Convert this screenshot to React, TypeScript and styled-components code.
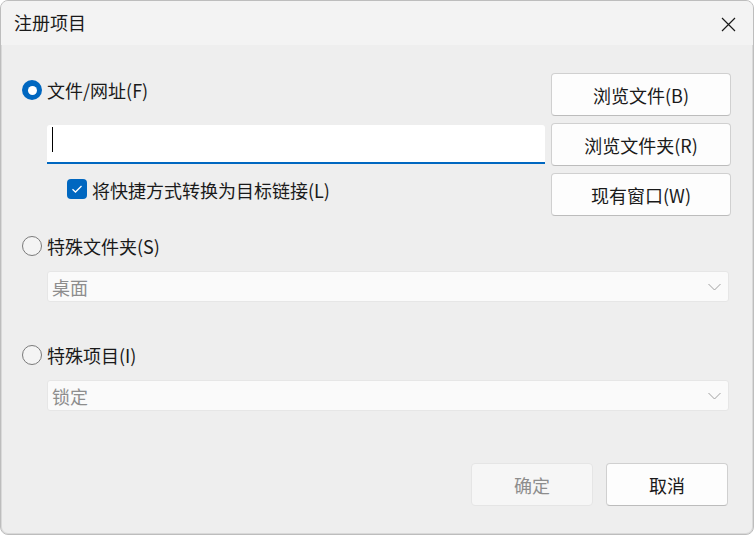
import React from "react";
import styled, { createGlobalStyle } from "styled-components";

const GlobalStyle = createGlobalStyle`
  html, body {
    margin: 0;
    padding: 0;
    background: #ffffff;
  }
  * { box-sizing: border-box; }
  body {
    font-family: "Noto Sans CJK SC", "Noto Sans", sans-serif;
    color: #1a1a1a;
  }
`;

const Window = styled.div`
  width: 754px;
  height: 535px;
  display: flex;
  flex-direction: column;
  background: #eeeeee;
  border: 1px solid #bdbdbd;
  border-radius: 8px;
  box-shadow: inset 0 0 0 1px #d9d9d9;
  overflow: hidden;
`;

const TitleBar = styled.div`
  height: 44px;
  flex: none;
  display: flex;
  align-items: center;
  justify-content: space-between;
  padding: 0 17px 0 13px;
  background: #f3f3f3;
`;

const Title = styled.span`
  font-size: 18px;
  line-height: 1;
  color: #1a1a1a;
  margin-top: -2px;
`;

const CloseButton = styled.button`
  width: 16px;
  height: 16px;
  padding: 0;
  border: none;
  background: transparent;
  display: flex;
  align-items: center;
  justify-content: center;
  margin-top: 2px;
`;

const Body = styled.div`
  flex: 1;
  display: flex;
  flex-direction: column;
  padding: 28px 22px 0 21px;
`;

const TopSection = styled.div`
  display: flex;
  gap: 6px;
`;

const LeftColumn = styled.div`
  flex: 1;
  display: flex;
  flex-direction: column;
`;

const ButtonColumn = styled.div`
  width: 180px;
  display: flex;
  flex-direction: column;
  gap: 7px;
`;

const RadioRow = styled.label<{ $top: number }>`
  display: flex;
  align-items: center;
  gap: 5px;
  height: 22px;
  margin-top: ${(p) => p.$top}px;
  font-size: 18px;
  color: #1a1a1a;
`;

const RadioDot = styled.span<{ $checked?: boolean }>`
  width: 20px;
  height: 20px;
  border-radius: 50%;
  flex: none;
  display: flex;
  align-items: center;
  justify-content: center;
  background: ${(p) => (p.$checked ? "#0067c0" : "#f4f4f4")};
  border: ${(p) => (p.$checked ? "none" : "1px solid #7a7a7a")};
  &::after {
    content: "";
    display: ${(p) => (p.$checked ? "block" : "none")};
    width: 9px;
    height: 9px;
    border-radius: 50%;
    background: #ffffff;
  }
`;

const TextField = styled.div`
  margin: 24px 0 0 25px;
  height: 39px;
  background: #ffffff;
  border-bottom: 2px solid #0067c0;
  border-radius: 3px 3px 0 0;
  display: flex;
  align-items: flex-start;
  padding: 2px 0 0 5px;
`;

const Caret = styled.span`
  width: 1px;
  height: 25px;
  background: #000000;
`;

const CheckRow = styled.label`
  display: flex;
  align-items: center;
  gap: 5px;
  height: 20px;
  margin: 15px 0 0 45px;
  font-size: 18px;
  color: #1a1a1a;
  & > span:last-child {
    margin-top: 2px;
  }
`;

const CheckBox = styled.span`
  width: 20px;
  height: 20px;
  flex: none;
  border-radius: 4px;
  background: #0067c0;
  display: flex;
  align-items: center;
  justify-content: center;
`;

const Button = styled.button<{ $disabled?: boolean; $width?: number }>`
  height: 43px;
  width: ${(p) => (p.$width ? `${p.$width}px` : "100%")};
  padding: 0;
  border-radius: 4px;
  border: 1px solid ${(p) => (p.$disabled ? "#e5e5e5" : "#d0d0d0")};
  border-bottom-color: ${(p) => (p.$disabled ? "#e5e5e5" : "#bcbcbc")};
  background: ${(p) => (p.$disabled ? "#f6f6f6" : "#fdfdfd")};
  color: ${(p) => (p.$disabled ? "#8d8d8d" : "#1a1a1a")};
  font-family: "Noto Sans CJK SC", "Noto Sans", sans-serif;
  font-size: 18px;
  line-height: 1;
  display: flex;
  align-items: center;
  justify-content: center;
`;

const Select = styled.div<{ $top: number }>`
  margin: ${(p) => p.$top}px 2px 0 25px;
  height: 31px;
  background: #fafafa;
  border: 1px solid #e6e6e6;
  border-radius: 3px;
  display: flex;
  align-items: center;
  justify-content: space-between;
  padding: 0 7px 0 4px;
  font-size: 18px;
  color: #8d8d8d;
`;

const Footer = styled.div`
  margin-top: 52px;
  display: flex;
  justify-content: flex-end;
  gap: 13px;
  padding-right: 3px;
`;

const CloseIcon = () => (
  <svg width="15" height="15" viewBox="0 0 15 15">
    <path d="M1 1 L14 14 M14 1 L1 14" stroke="#1a1a1a" strokeWidth="1.2" fill="none" />
  </svg>
);

const CheckIcon = () => (
  <svg width="12" height="10" viewBox="0 0 12 10">
    <path d="M1.5 5.2 L4.5 8 L10.5 2" stroke="#ffffff" strokeWidth="1.3" fill="none" />
  </svg>
);

const Chevron = () => (
  <svg width="13" height="8" viewBox="0 0 13 8">
    <path d="M0.5 1 L6.5 7 L12.5 1" stroke="#a0a0a0" strokeWidth="1" fill="none" />
  </svg>
);

export default function App() {
  return (
    <>
      <GlobalStyle />
      <Window>
        <TitleBar>
          <Title>注册项目</Title>
          <CloseButton aria-label="关闭">
            <CloseIcon />
          </CloseButton>
        </TitleBar>
        <Body>
          <TopSection>
            <LeftColumn>
              <RadioRow $top={6}>
                <RadioDot $checked />
                文件/网址(F)
              </RadioRow>
              <TextField>
                <Caret />
              </TextField>
              <CheckRow>
                <CheckBox>
                  <CheckIcon />
                </CheckBox>
                <span>将快捷方式转换为目标链接(L)</span>
              </CheckRow>
            </LeftColumn>
            <ButtonColumn>
              <Button>浏览文件(B)</Button>
              <Button>浏览文件夹(R)</Button>
              <Button>现有窗口(W)</Button>
            </ButtonColumn>
          </TopSection>

          <RadioRow $top={19}>
            <RadioDot />
            特殊文件夹(S)
          </RadioRow>
          <Select $top={14}>
            <span>桌面</span>
            <Chevron />
          </Select>

          <RadioRow $top={42}>
            <RadioDot />
            特殊项目(I)
          </RadioRow>
          <Select $top={14}>
            <span>锁定</span>
            <Chevron />
          </Select>

          <Footer>
            <Button $disabled $width={122}>确定</Button>
            <Button $width={122}>取消</Button>
          </Footer>
        </Body>
      </Window>
    </>
  );
}
